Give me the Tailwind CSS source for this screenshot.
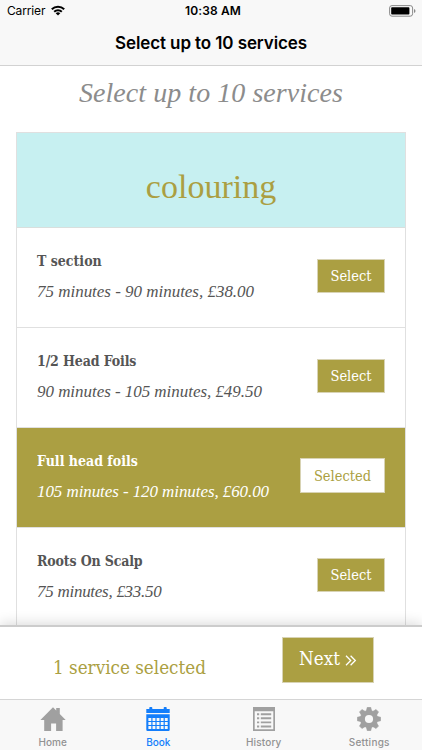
<!DOCTYPE html>
<html lang="en">
<head>
<meta charset="utf-8">
<title>Select up to 10 services</title>
<script src="https://cdn.jsdelivr.net/npm/@tailwindcss/browser@4"></script>
</head>
<body class="bg-white">
<div class="flex h-[750px] w-[422px] flex-col overflow-hidden bg-white font-['DejaVu_Serif_Condensed','DejaVu_Serif',serif] text-[#555555]">

  <header class="h-[66px] shrink-0 border-b border-[#d2d2d2] bg-[#f8f8f8] font-[Inter,sans-serif] text-black">
    <div class="grid h-[22px] grid-cols-3 items-center pr-[6px] pl-[7px] text-[12px]">
      <div class="flex items-center gap-[6px]">
        <span class="tracking-[-0.15px]">Carrier</span>
        <svg class="-mt-px h-[11px] w-[14px]" viewBox="0 0 14 11" fill="none" stroke="#000" stroke-width="2">
          <path d="M.8 4.2a8.800 8.800 0 0 1 12.400 0"/>
          <path d="M3.200 6.700a5.400 5.400 0 0 1 7.600 0"/>
          <path d="M7 10.600 4.700 8.300a3.300 3.300 0 0 1 4.600 0z" fill="#000" stroke="none"/>
        </svg>
      </div>
      <div class="pl-[3px] text-center font-semibold tracking-[0.12px]">10:38 AM</div>
      <svg class="h-[12px] w-[27px] justify-self-end" viewBox="0 0 27 12">
        <rect x=".6" y=".6" width="23" height="10.600" rx="2.400" fill="none" stroke="#8a8a8a"/>
        <rect x="2.200" y="2.200" width="18.200" height="7.400" rx=".8" fill="#000"/>
        <path d="M25 4v4q1.500-.5 1.500-2T25 4z" fill="#8a8a8a"/>
      </svg>
    </div>
    <h1 class="text-center text-[17px] leading-[43px] font-semibold tracking-[-0.1px]">Select up to 10 services</h1>
  </header>

  <main class="min-h-0 flex-1 overflow-hidden px-4 pt-[7px]">
    <h2 class="text-center font-['Liberation_Serif',serif] text-[28px] leading-10 tracking-[0.05px] text-[#8c8c8c] italic">Select up to 10 services</h2>
    <section class="mt-[19px] w-[390px] border border-[#e0e0e0]">
      <div class="h-[95px] border-b border-[#d9dfdd] bg-[#c7f0f1] pt-[34px] text-center font-['Liberation_Serif',serif] text-[34px] leading-10 text-[#ab9f42]">colouring</div>

      <div class="flex h-[100px] justify-between border-b border-[#e0e0e0] pr-5 pl-5">
        <div class="pt-[23px] leading-5">
          <h3 class="text-[14px] font-bold">T section</h3>
          <p class="mt-[11px] font-['Liberation_Serif',serif] text-[17px] tracking-[-0.02px] italic">75 minutes - 90 minutes, £38.00</p>
        </div>
        <button class="mt-[31px] h-[34px] w-[68px] border border-[#d8d3b4] bg-[#ab9f42] text-[14.5px] leading-5 text-white">Select</button>
      </div>

      <div class="flex h-[100px] justify-between border-b border-[#e0e0e0] pr-5 pl-5">
        <div class="pt-[23px] leading-5">
          <h3 class="text-[14px] font-bold tracking-[-0.12px]">1/2 Head Foils</h3>
          <p class="mt-[11px] font-['Liberation_Serif',serif] text-[17px] tracking-[-0.04px] italic">90 minutes - 105 minutes, £49.50</p>
        </div>
        <button class="mt-[31px] h-[34px] w-[68px] border border-[#d8d3b4] bg-[#ab9f42] text-[14.5px] leading-5 text-white">Select</button>
      </div>

      <div class="flex h-[100px] justify-between border-b border-[#e0e0e0] bg-[#ab9f42] pr-5 pl-5 text-white">
        <div class="pt-[23px] leading-5">
          <h3 class="text-[14px] font-bold">Full head foils</h3>
          <p class="mt-[11px] font-['Liberation_Serif',serif] text-[17px] tracking-[-0.08px] italic">105 minutes - 120 minutes, £60.00</p>
        </div>
        <button class="mt-[30px] h-[35px] w-[85px] border border-[#d8d3b4] bg-white text-[14.5px] leading-5 text-[#ab9f42]">Selected</button>
      </div>

      <div class="flex h-[100px] justify-between pr-5 pl-5">
        <div class="pt-[23px] leading-5">
          <h3 class="text-[14px] font-bold tracking-[-0.15px]">Roots On Scalp</h3>
          <p class="mt-[11px] font-['Liberation_Serif',serif] text-[17px] tracking-[-0.27px] italic">75 minutes, £33.50</p>
        </div>
        <button class="mt-[30px] h-[34px] w-[68px] border border-[#d8d3b4] bg-[#ab9f42] text-[14.5px] leading-5 text-white">Select</button>
      </div>
    </section>
  </main>

  <div class="relative flex h-[74px] shrink-0 justify-between border-t-2 border-[#cccccc] bg-white pr-[48px] pl-[53px] shadow-[0_-2px_12px_rgba(0,0,0,0.14)]">
    <p class="pt-[29px] text-[18.7px] leading-6 text-[#ab9f42]">1 service selected</p>
    <button class="mt-[10px] flex h-[46px] w-[92px] items-center border border-[#d8d3b4] bg-[#ab9f42] pb-[2px] pl-4 text-[18.7px] leading-6 text-white">
      <span class="w-[42px] text-left">Next</span>
      <svg class="mt-[2px] ml-[4px] h-[11px] w-[12px]" viewBox="0 0 12 11" fill="none" stroke="#fff" stroke-width="1.300"><path d="m1 .8 4.700 4.700L1 10.200M5.600.8l4.700 4.700-4.700 4.700"/></svg>
    </button>
  </div>

  <nav class="relative grid h-[51px] shrink-0 grid-cols-4 border-t border-[#d5d5d5] bg-[#f8f8f8] font-[Inter,sans-serif] text-[10px] leading-3 font-medium text-[#929292]">
    <div class="flex flex-col items-center pt-[7px]">
      <svg class="h-6 w-[26px]" viewBox="0 0 26 24" fill="#a0a0a0"><path d="M13 .3 16.200 3.500V1h3.600v6.100l5.900 5.900h-3.100v11h-6.500v-7.600h-5V24H4.200V13H.4z"/></svg>
      <span class="mt-[5px] tracking-[0.1px]">Home</span>
    </div>
    <div class="flex flex-col items-center pt-[7px] text-[#147efb]">
      <svg class="h-6 w-6" viewBox="0 0 24 24">
        <path fill="#147efb" d="M.3 2h3V.8q0-.8.8-.8h1.400q.8 0 .8.8V2h11.400V.8q0-.8.8-.8h1.400q.8 0 .8.800V2h3v3.900H.3zM.3 7.200h23.400v15.600q0 1.200-1.200 1.200h-21q-1.200 0-1.200-1.200z"/>
        <path fill="none" stroke="#f8f8f8" stroke-width="2.900" stroke-dasharray="2.900 1.200" d="M2.400 12.500h19.400M2.400 16.500h19.400M2.400 20.500h19.400"/>
      </svg>
      <span class="mt-[5px]">Book</span>
    </div>
    <div class="flex flex-col items-center pt-[7px]">
      <svg class="h-6 w-[22px]" viewBox="0 0 22 24">
        <path fill="#a0a0a0" fill-rule="evenodd" d="M0 0h22v24H0zM1.700 4.300v18h18.600v-18z"/>
        <path fill="none" stroke="#a0a0a0" stroke-width="1.900" d="M4 7.200h2.200M7.800 7.200h10.400M4 11.300h2.200M7.800 11.300h10.400M4 15.400h2.200M7.800 15.400h10.400M4 19.500h2.200M7.800 19.500h10.400"/>
      </svg>
      <span class="mt-[5px] tracking-[0.15px]">History</span>
    </div>
    <div class="flex flex-col items-center pt-[7px]">
      <svg class="h-6 w-6" viewBox="0 0 24 24">
        <g fill="#a0a0a0" stroke="#a0a0a0" stroke-width=".6" stroke-linejoin="round">
          <path d="M9.200 4.500 10.300.3h3.400l1.100 4.200v15l-1.100 4.200h-3.400l-1.100-4.200z"/>
          <path d="M9.200 4.500 10.300.3h3.400l1.100 4.200v15l-1.100 4.200h-3.400l-1.100-4.200z" transform="rotate(45 12 12)"/>
          <path d="M9.200 4.500 10.300.3h3.400l1.100 4.200v15l-1.100 4.200h-3.400l-1.100-4.200z" transform="rotate(90 12 12)"/>
          <path d="M9.200 4.500 10.300.3h3.400l1.100 4.200v15l-1.100 4.200h-3.400l-1.100-4.200z" transform="rotate(135 12 12)"/>
          <circle cx="12" cy="12" r="8.600"/>
        </g>
        <circle cx="12" cy="12" r="4.100" fill="#f8f8f8"/>
      </svg>
      <span class="mt-[5px] tracking-[0.25px]">Settings</span>
    </div>
  </nav>
</div>
</body>
</html>
